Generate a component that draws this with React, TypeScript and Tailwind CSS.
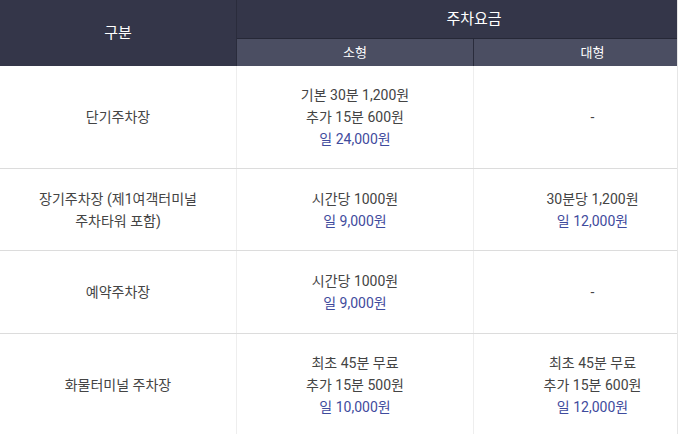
const rows = [
  {
    name: ['단기주차장'],
    small: ['기본 30분 1,200원', '추가 15분 600원'],
    smallDay: '일 24,000원',
    large: [] as string[],
    largeDay: '',
    h: 'h-[103px]',
  },
  {
    name: ['장기주차장 (제1여객터미널', '주차타워 포함)'],
    small: ['시간당 1000원'],
    smallDay: '일 9,000원',
    large: ['30분당 1,200원'],
    largeDay: '일 12,000원',
    h: 'h-[82px]',
  },
  {
    name: ['예약주차장'],
    small: ['시간당 1000원'],
    smallDay: '일 9,000원',
    large: [] as string[],
    largeDay: '',
    h: 'h-[83px]',
  },
  {
    name: ['화물터미널 주차장'],
    small: ['최초 45분 무료', '추가 15분 500원'],
    smallDay: '일 10,000원',
    large: ['최초 45분 무료', '추가 15분 600원'],
    largeDay: '일 12,000원',
    h: 'h-[102px]',
  },
]

function Fee({ lines, day }: { lines: string[]; day: string }) {
  if (!day) return <div>-</div>
  return (
    <>
      {lines.map((l) => (
        <div key={l}>{l}</div>
      ))}
      <div className="text-[#3f4b9d]">{day}</div>
    </>
  )
}

export default function App() {
  return (
    <div
      className="w-[678px] h-[434px] overflow-hidden bg-white border-r border-[#e6e6e6]"
      style={{ fontFamily: 'Roboto, "Noto Sans CJK KR", sans-serif' }}
    >
      <div className="w-[711px]">
        {/* header */}
        <div className="grid grid-cols-[237px_237px_237px] text-white">
          <div className="row-span-2 flex items-center justify-center bg-[#343649] border-r border-[#2a2c3c] text-[15px] pt-[1px]">
            구분
          </div>
          <div className="col-span-2 h-[39px] flex items-center justify-center bg-[#343649] border-b border-[#262837] text-[15px]">
            주차요금
          </div>
          <div className="h-[27px] flex items-center justify-center bg-[#4b4e62] border-r border-[#2a2c3c] text-[13px]">
            소형
          </div>
          <div className="h-[27px] flex items-center justify-center bg-[#4b4e62] text-[13px]">
            대형
          </div>
        </div>

        {/* body */}
        {rows.map((r, i) => (
          <div
            key={i}
            className={`${r.h} grid grid-cols-[237px_237px_237px] border-b border-[#dcdcdc] text-[14px] leading-[22px] text-[#444]`}
          >
            <div className="flex flex-col items-center justify-center text-center border-r border-[#eeeeee]">
              {r.name.map((n) => (
                <div key={n}>{n}</div>
              ))}
            </div>
            <div className="flex flex-col items-center justify-center text-center border-r border-[#eeeeee]">
              <Fee lines={r.small} day={r.smallDay} />
            </div>
            <div className="flex flex-col items-center justify-center text-center">
              <Fee lines={r.large} day={r.largeDay} />
            </div>
          </div>
        ))}
      </div>
    </div>
  )
}
